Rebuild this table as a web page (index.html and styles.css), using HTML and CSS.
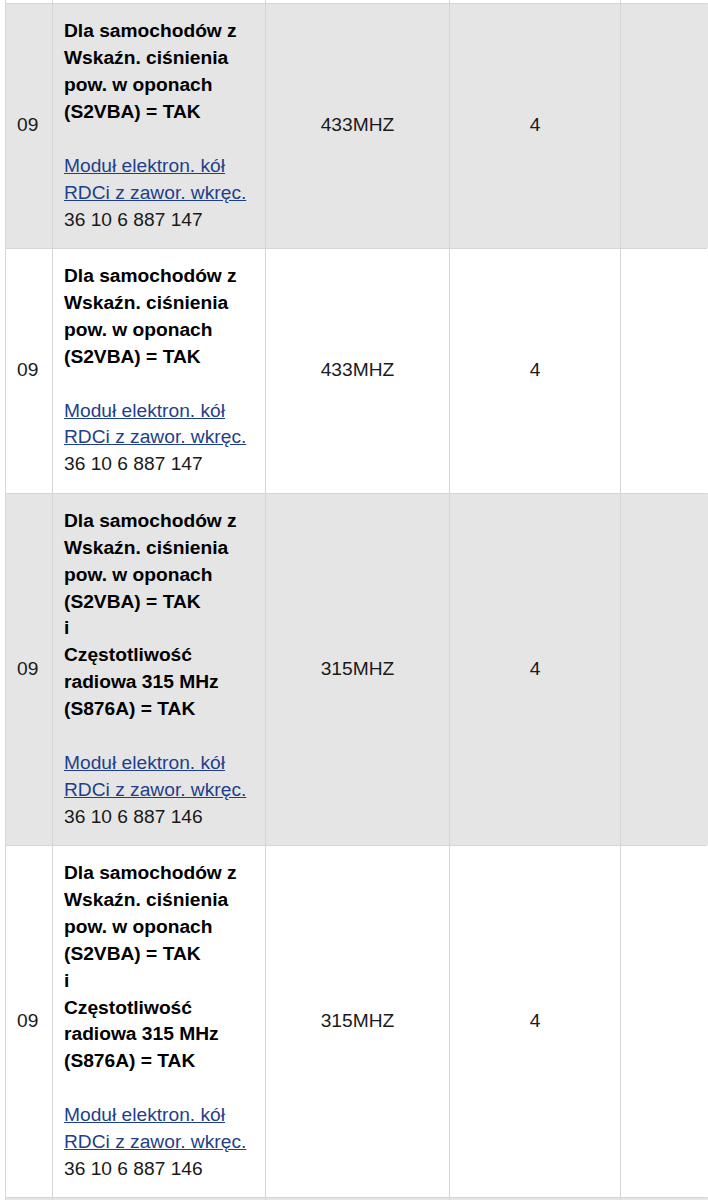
FILE: index.html
```html
<!DOCTYPE html>
<html lang="pl">
<head>
<meta charset="utf-8">
<title>Tabela</title>
<link rel="stylesheet" href="styles.css">
</head>
<body>
<div class="table">
  <div class="row strip">
    <div class="cell"></div><div class="cell"></div><div class="cell"></div><div class="cell"></div><div class="cell"></div>
  </div>

  <div class="row odd">
    <div class="cell c-num">09</div>
    <div class="cell c-desc">
      <p class="cond">Dla samochodów z Wskaźn. ciśnienia pow. w oponach (S2VBA) = TAK</p>
      <p class="part"><a href="#">Moduł elektron. kół RDCi z zawor. wkręc.</a><br>36 10 6 887 147</p>
    </div>
    <div class="cell c-center">433MHZ</div>
    <div class="cell c-center">4</div>
    <div class="cell"></div>
  </div>

  <div class="row">
    <div class="cell c-num">09</div>
    <div class="cell c-desc">
      <p class="cond">Dla samochodów z Wskaźn. ciśnienia pow. w oponach (S2VBA) = TAK</p>
      <p class="part"><a href="#">Moduł elektron. kół RDCi z zawor. wkręc.</a><br>36 10 6 887 147</p>
    </div>
    <div class="cell c-center">433MHZ</div>
    <div class="cell c-center">4</div>
    <div class="cell"></div>
  </div>

  <div class="row odd">
    <div class="cell c-num">09</div>
    <div class="cell c-desc">
      <p class="cond">Dla samochodów z Wskaźn. ciśnienia pow. w oponach (S2VBA) = TAK<br>i<br>Częstotliwość radiowa 315 MHz (S876A) = TAK</p>
      <p class="part"><a href="#">Moduł elektron. kół RDCi z zawor. wkręc.</a><br>36 10 6 887 146</p>
    </div>
    <div class="cell c-center">315MHZ</div>
    <div class="cell c-center">4</div>
    <div class="cell"></div>
  </div>

  <div class="row">
    <div class="cell c-num">09</div>
    <div class="cell c-desc">
      <p class="cond">Dla samochodów z Wskaźn. ciśnienia pow. w oponach (S2VBA) = TAK<br>i<br>Częstotliwość radiowa 315 MHz (S876A) = TAK</p>
      <p class="part"><a href="#">Moduł elektron. kół RDCi z zawor. wkręc.</a><br>36 10 6 887 146</p>
    </div>
    <div class="cell c-center">315MHZ</div>
    <div class="cell c-center">4</div>
    <div class="cell"></div>
  </div>

  <div class="row odd strip">
    <div class="cell"></div><div class="cell"></div><div class="cell"></div><div class="cell"></div><div class="cell"></div>
  </div>
</div>
</body>
</html>
```

FILE: styles.css
```css
html, body {
  margin: 0;
  padding: 0;
  background: #ffffff;
}

body {
  font-family: "Liberation Sans", Arial, sans-serif;
  font-size: 19.2px;
  line-height: 26.88px;
  color: #1a1a1a;
  padding-left: 5px;
}

.table {
  width: 703px;
  border-right: 1px solid #d6d6d6;
}

.row {
  display: grid;
  grid-template-columns: 47px 213px 184px 171px 87px;
}

.row.odd {
  background: #e5e5e5;
}

.cell {
  border-left: 1px solid #d6d6d6;
  border-top: 1px solid #d6d6d6;
  padding: 14.4px 11px;
}

.row.strip .cell {
  height: 3px;
  padding: 0;
}

.row.strip:first-child .cell {
  border-top: none;
}

.c-num {
  display: flex;
  align-items: center;
}

.c-center {
  display: flex;
  align-items: center;
  justify-content: center;
}

.c-desc p {
  margin: 0;
}

.cond {
  font-weight: bold;
  color: #000;
}

.part {
  padding-top: 26.88px;
}

.part a {
  color: #1f3f8a;
  text-decoration: underline;
}
```
